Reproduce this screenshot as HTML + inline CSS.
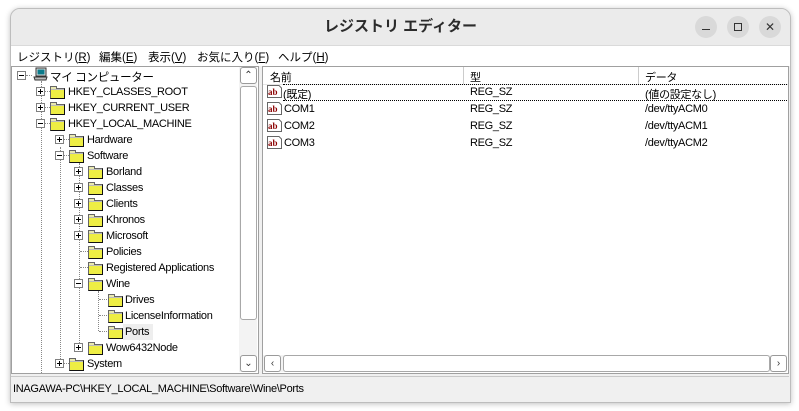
<!DOCTYPE html>
<html><head><meta charset="utf-8">
<style>
body{margin:0;width:799px;height:411px;background:#fff;position:relative;overflow:hidden;font-family:"Liberation Sans","Noto Sans CJK JP",sans-serif;font-size:11px;color:#000}
.win{position:absolute;left:10px;top:8px;width:779px;height:393px;background:#f0f0f0;border:1px solid #bdbdbd;border-radius:10px 10px 0 0;box-shadow:0 1px 6px rgba(0,0,0,.25);overflow:hidden}
.title{position:absolute;left:0;top:0;width:779px;height:36px;background:#ebebeb;border-bottom:1px solid #dadada;text-align:center;line-height:36px;font-size:15px;font-weight:bold;color:#2b2b2b}
.btn{position:absolute;top:7px;width:22px;height:22px;border-radius:11px;background:#d9d9d9}
.menu{position:absolute;left:0;top:37px;width:779px;height:20px;background:#fff;font-size:11.5px}
.menu span{position:absolute;top:3px}
.a{position:absolute;white-space:nowrap;letter-spacing:-0.3px;margin-top:2px}
.pane{position:absolute;background:#fff;border:1px solid #a0a0a0}
.exp{position:absolute;width:7px;height:7px;border:1px solid #808080;background:#fff}
.exp:before{content:"";position:absolute;left:1px;top:3px;width:5px;height:1px;background:#000}
.exp.p:after{content:"";position:absolute;left:3px;top:1px;width:1px;height:5px;background:#000}
.v{position:absolute;border-left:1px dotted #888;width:0}
.h{position:absolute;border-top:1px dotted #888;height:0}
.f{position:absolute;width:13px;height:9px;margin-top:4px;background:#eeee44;border:1px solid #666;border-right-color:#111;border-bottom-color:#111;box-shadow:inset 0 1px 0 #bbb}
.f:before{content:"";position:absolute;left:-1px;top:-3px;width:5px;height:2px;background:#e8e8b0;border:1px solid #666;border-bottom:none}
.sb{position:absolute;background:#f3f3f3}
.sbtn{position:absolute;width:15px;height:15px;border:1px solid #9a9a9a;border-radius:3px;background:#fff;font-size:10px;text-align:center;line-height:15px;color:#333}
.ab{position:absolute;width:15px;height:13px}
</style></head><body>
<div class="win">
<div class="title">レジストリ エディター</div>
<div class="btn" style="left:684px"><div style="position:absolute;left:7px;top:13px;width:8px;height:1px;background:#333"></div></div>
<div class="btn" style="left:716px"><div style="position:absolute;left:7px;top:7px;width:6px;height:6px;border:1px solid #333"></div></div>
<div class="btn" style="left:748px;text-align:center;line-height:22px;font-size:12px;color:#333">✕</div>
<div class="menu">
<span style="left:6px">レジストリ(<u>R</u>)</span><span style="left:88px">編集(<u>E</u>)</span><span style="left:137px">表示(<u>V</u>)</span><span style="left:186px">お気に入り(<u>F</u>)</span><span style="left:267px">ヘルプ(<u>H</u>)</span>
</div>
</div>

<div class="pane" style="left:11px;top:66px;width:246px;height:306px"></div>
<div style="position:absolute;left:12px;top:67px;width:246px;height:306px;overflow:hidden">
<div class="v" style="left:29px;top:14px;height:300px"></div>
<div class="v" style="left:48px;top:80px;height:216px"></div>
<div class="v" style="left:67px;top:96px;height:184px"></div>
<div class="v" style="left:86px;top:224px;height:40px"></div>
</div>

<div class="sb" style="left:239px;top:67px;width:18px;height:305px"></div>
<div class="sbtn" style="left:240px;top:67px">⌃</div>
<div style="position:absolute;left:240px;top:86px;width:15px;height:232px;border:1px solid #a8a8a8;border-radius:3px;background:#fff"></div>
<div class="sbtn" style="left:240px;top:355px">⌄</div>

<div class="exp" style="left:17px;top:71px"></div>
<div class="h" style="left:26px;top:75px;width:6px"></div>
<svg style="position:absolute;left:33px;top:67px" width="15" height="15" viewBox="0 0 15 15"><rect x="3" y="1" width="10" height="8" fill="#ddd" stroke="#333"/><rect x="4.5" y="2.5" width="7" height="5" fill="#0a7a8a"/><path d="M1 10 H14 L13 13 H2 Z" fill="#bbb" stroke="#333"/></svg>
<div class="a" style="left:50px;top:67px;font-size:11.5px">マイ コンピューター</div>

<div class="exp p" style="left:36px;top:87px"></div><div class="h" style="left:45px;top:91px;width:5px"></div>
<div class="f" style="left:50px;top:84px"></div><div class="a" style="left:68px;top:84px">HKEY_CLASSES_ROOT</div>
<div class="exp p" style="left:36px;top:103px"></div><div class="h" style="left:45px;top:107px;width:5px"></div>
<div class="f" style="left:50px;top:100px"></div><div class="a" style="left:68px;top:100px">HKEY_CURRENT_USER</div>
<div class="exp" style="left:36px;top:119px"></div><div class="h" style="left:45px;top:123px;width:5px"></div>
<div class="f" style="left:50px;top:116px"></div><div class="a" style="left:68px;top:116px">HKEY_LOCAL_MACHINE</div>

<div class="exp p" style="left:55px;top:135px"></div><div class="h" style="left:64px;top:139px;width:5px"></div>
<div class="f" style="left:69px;top:132px"></div><div class="a" style="left:87px;top:132px">Hardware</div>
<div class="exp" style="left:55px;top:151px"></div><div class="h" style="left:64px;top:155px;width:5px"></div>
<div class="f" style="left:69px;top:148px"></div><div class="a" style="left:87px;top:148px">Software</div>

<div class="exp p" style="left:74px;top:167px"></div><div class="f" style="left:88px;top:164px"></div><div class="a" style="left:106px;top:164px">Borland</div>
<div class="exp p" style="left:74px;top:183px"></div><div class="f" style="left:88px;top:180px"></div><div class="a" style="left:106px;top:180px">Classes</div>
<div class="exp p" style="left:74px;top:199px"></div><div class="f" style="left:88px;top:196px"></div><div class="a" style="left:106px;top:196px">Clients</div>
<div class="exp p" style="left:74px;top:215px"></div><div class="f" style="left:88px;top:212px"></div><div class="a" style="left:106px;top:212px">Khronos</div>
<div class="exp p" style="left:74px;top:231px"></div><div class="f" style="left:88px;top:228px"></div><div class="a" style="left:106px;top:228px">Microsoft</div>
<div class="h" style="left:80px;top:251px;width:8px"></div><div class="f" style="left:88px;top:244px"></div><div class="a" style="left:106px;top:244px">Policies</div>
<div class="h" style="left:80px;top:267px;width:8px"></div><div class="f" style="left:88px;top:260px"></div><div class="a" style="left:106px;top:260px">Registered Applications</div>
<div class="exp" style="left:74px;top:279px"></div><div class="f" style="left:88px;top:276px"></div><div class="a" style="left:106px;top:276px">Wine</div>

<div class="h" style="left:99px;top:299px;width:8px"></div><div class="f" style="left:108px;top:292px"></div><div class="a" style="left:125px;top:292px">Drives</div>
<div class="h" style="left:99px;top:315px;width:8px"></div><div class="f" style="left:108px;top:308px"></div><div class="a" style="left:125px;top:308px">LicenseInformation</div>
<div class="h" style="left:99px;top:331px;width:8px"></div><div style="position:absolute;left:123px;top:324px;width:30px;height:16px;background:#eeeeee"></div><div class="f" style="left:108px;top:324px"></div><div class="a" style="left:125px;top:324px">Ports</div>

<div class="exp p" style="left:74px;top:343px"></div><div class="f" style="left:88px;top:340px"></div><div class="a" style="left:106px;top:340px">Wow6432Node</div>
<div class="exp p" style="left:55px;top:359px"></div><div class="h" style="left:64px;top:363px;width:5px"></div>
<div class="f" style="left:69px;top:356px"></div><div class="a" style="left:87px;top:356px">System</div>

<div class="pane" style="left:262px;top:66px;width:525px;height:306px"></div>
<div style="position:absolute;left:263px;top:67px;width:525px;height:17px;background:#fff;border-bottom:1px solid #e5e5e5"></div>
<div style="position:absolute;left:463px;top:67px;width:1px;height:17px;background:#ccc"></div>
<div style="position:absolute;left:638px;top:67px;width:1px;height:17px;background:#ccc"></div>
<div class="a" style="left:270px;top:67px">名前</div><div class="a" style="left:470px;top:67px">型</div><div class="a" style="left:645px;top:67px">データ</div>
<div style="position:absolute;left:283px;top:84px;width:504px;height:15px;border-top:1px dotted #000;border-bottom:1px dotted #000"></div>
<svg class="ab" style="left:267px;top:85px" viewBox="0 0 15 13"><path d="M0.5 0.5 H12 L14.5 3 V12.5 H0.5 Z" fill="#fff" stroke="#666"/><text x="1" y="10" font-size="9" font-weight="bold" fill="#8b0000" font-family="Liberation Serif,serif">ab</text></svg><div class="a" style="left:283px;top:84px">(既定)</div><div class="a" style="left:470px;top:84px">REG_SZ</div><div class="a" style="left:645px;top:84px">(値の設定なし)</div>
<svg class="ab" style="left:267px;top:102px" viewBox="0 0 15 13"><path d="M0.5 0.5 H12 L14.5 3 V12.5 H0.5 Z" fill="#fff" stroke="#666"/><text x="1" y="10" font-size="9" font-weight="bold" fill="#8b0000" font-family="Liberation Serif,serif">ab</text></svg><div class="a" style="left:284px;top:101px">COM1</div><div class="a" style="left:470px;top:101px">REG_SZ</div><div class="a" style="left:645px;top:101px">/dev/ttyACM0</div>
<svg class="ab" style="left:267px;top:119px" viewBox="0 0 15 13"><path d="M0.5 0.5 H12 L14.5 3 V12.5 H0.5 Z" fill="#fff" stroke="#666"/><text x="1" y="10" font-size="9" font-weight="bold" fill="#8b0000" font-family="Liberation Serif,serif">ab</text></svg><div class="a" style="left:284px;top:118px">COM2</div><div class="a" style="left:470px;top:118px">REG_SZ</div><div class="a" style="left:645px;top:118px">/dev/ttyACM1</div>
<svg class="ab" style="left:267px;top:136px" viewBox="0 0 15 13"><path d="M0.5 0.5 H12 L14.5 3 V12.5 H0.5 Z" fill="#fff" stroke="#666"/><text x="1" y="10" font-size="9" font-weight="bold" fill="#8b0000" font-family="Liberation Serif,serif">ab</text></svg><div class="a" style="left:284px;top:135px">COM3</div><div class="a" style="left:470px;top:135px">REG_SZ</div><div class="a" style="left:645px;top:135px">/dev/ttyACM2</div>

<div class="sb" style="left:263px;top:355px;width:524px;height:17px"></div>
<div class="sbtn" style="left:264px;top:355px">‹</div>
<div style="position:absolute;left:283px;top:355px;width:485px;height:15px;border:1px solid #a8a8a8;border-radius:3px;background:#fff"></div>
<div class="sbtn" style="left:770px;top:355px">›</div>

<div style="position:absolute;left:11px;top:376px;width:778px;height:1px;background:#c8c8c8"></div>
<div class="a" style="left:13px;top:381px">INAGAWA-PC\HKEY_LOCAL_MACHINE\Software\Wine\Ports</div>
</body></html>
